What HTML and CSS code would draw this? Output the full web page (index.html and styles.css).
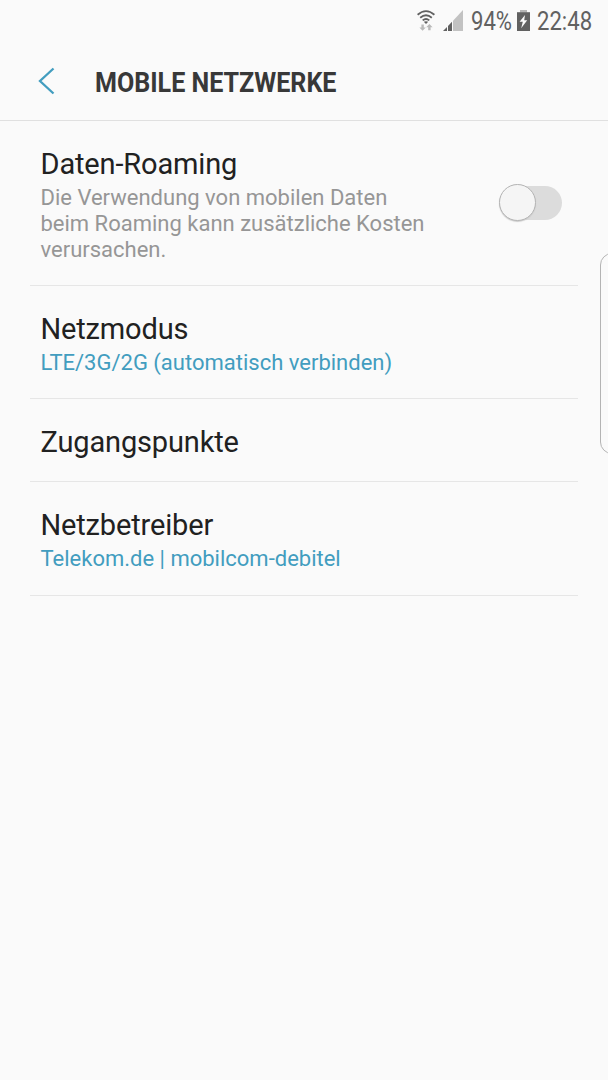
FILE: index.html
```html
<!DOCTYPE html>
<html lang="de">

<head>
  <meta charset="UTF-8">
  <title>Mobile Netzwerke</title>
  <link rel="stylesheet" href="styles.css">
</head>

<body>
  <div class="status-bar">
    <svg class="wifi" width="18" height="22" viewBox="0 0 18 22">
      <g fill="none" stroke="#616161" stroke-width="1.8">
        <path d="M0.6 4.8Q9 -2.6 17.4 4.8"/>
        <path d="M3.2 7.7Q9 2.7 14.8 7.7"/>
        <path d="M5.7 10.4Q9 7.6 12.3 10.4"/>
      </g>
      <path d="M6.8 11.8Q9 10.6 11.2 11.8L9 14z" fill="#616161"/>
      <path d="M4.4 14.5h2.4v3h2L5.6 20.8l-3.2-3.3h2zM11.2 20.3h2.4v-3h2L12.4 14l-3.2 3.3h2z" fill="#bababa"/>
    </svg>
    <svg class="signal" width="20" height="21" viewBox="0 0 20 21">
      <path d="M0 21L4 17V21z" fill="#616161"/>
      <path d="M5 21V16L9 11.8V21z" fill="#616161"/>
      <path d="M10 21V10.8L20 0V21z" fill="#c2c2c2"/>
    </svg>
    <span class="percent"><span class="narrow">94%</span></span>
    <svg class="battery" width="13" height="21" viewBox="0 0 13 21">
      <path d="M3 0h7v2.5H3z" fill="#b5b5b5"/>
      <path d="M0 2.2h13V21H0z" fill="#616161"/>
      <path d="M8 5L2.6 11.8h3.2L4.2 18.2l6-8H7.2z" fill="#fafafa"/>
    </svg>
    <span class="time"><span class="narrow">22:48</span></span>
  </div>

  <header class="header">
    <svg class="back" width="17" height="28" viewBox="0 0 17 28">
      <path d="M15.5 1.5L2 14l13.5 12.5" fill="none" stroke="#429dbf" stroke-width="2.3"/>
    </svg>
    <h1>MOBILE NETZWERKE</h1>
  </header>

  <ul class="list">
    <li class="item">
      <div class="text">
        <div class="title">Daten-Roaming</div>
        <div class="summary">Die Verwendung von mobilen Daten<br>beim Roaming kann zusätzliche Kosten<br>verursachen.</div>
      </div>
      <div class="switch"><div class="knob"></div></div>
    </li>
    <li class="item">
      <div class="text">
        <div class="title">Netzmodus</div>
        <div class="summary value">LTE/3G/2G (automatisch verbinden)</div>
      </div>
    </li>
    <li class="item">
      <div class="title">Zugangspunkte</div>
    </li>
    <li class="item">
      <div class="text">
        <div class="title">Netzbetreiber</div>
        <div class="summary value">Telekom.de | mobilcom-debitel</div>
      </div>
    </li>
  </ul>

  <div class="edge-handle"></div>
</body>

</html>
```

FILE: styles.css
```css
* {
  box-sizing: border-box;
}

body {
  margin: 0;
  height: 1080px;
  position: relative;
  overflow: hidden;
  background-color: #fafafa;
  color: #212121;
  font-family: Roboto, "Liberation Sans", sans-serif;
}

.status-bar {
  display: flex;
  height: 42px;
  padding: 10px 15px 0 417px;
  color: #616161;
  font-size: 25px;
  line-height: 23px;
}
.wifi {
  flex: none;
}
.signal {
  flex: none;
  margin-left: 8px;
}
.percent {
  width: 41px;
  margin-left: 8px;
}
.battery {
  flex: none;
  margin-left: 5px;
}
.time {
  width: 56px;
  margin-left: 7px;
}
.narrow {
  display: inline-block;
  transform: scaleX(0.885);
  transform-origin: left;
}

.header {
  display: flex;
  align-items: center;
  height: 79px;
  padding-left: 38px;
  border-bottom: 1px solid #e0e0e0;
}
.header h1 {
  margin: 3px 0 0 40px;
  color: #383838;
  font-size: 28.5px;
  line-height: 34px;
  white-space: nowrap;
  transform: scaleX(0.88);
  transform-origin: left;
}

.list {
  margin: 0;
  padding: 0 30px;
  list-style: none;
}
.item {
  display: flex;
  justify-content: space-between;
  padding: 26px 16px 22px 10.5px;
  border-bottom: 1px solid #e6e6e6;
}
.item:last-child {
  padding-bottom: 23px;
}
.title {
  font-size: 29px;
  line-height: 34px;
  letter-spacing: -0.15px;
}
.summary {
  margin-top: 4px;
  color: #969696;
  font-size: 22px;
  line-height: 26px;
}
.value {
  color: #429dbf;
}

.switch {
  align-self: center;
  width: 62px;
  height: 34px;
  margin-bottom: 4px;
  border-radius: 17px;
  background-color: #dcdcdc;
}
.knob {
  width: 37px;
  height: 37px;
  margin: -2px 0 0 -1px;
  border: 1px solid #b4b4b4;
  border-radius: 50%;
  background-color: #f5f5f5;
  box-shadow: 0 1px 1px #ccc;
}

.edge-handle {
  position: absolute;
  top: 253px;
  right: -20px;
  width: 28px;
  height: 201px;
  border: 1px solid #b4b4b4;
  border-radius: 12px;
}
```
